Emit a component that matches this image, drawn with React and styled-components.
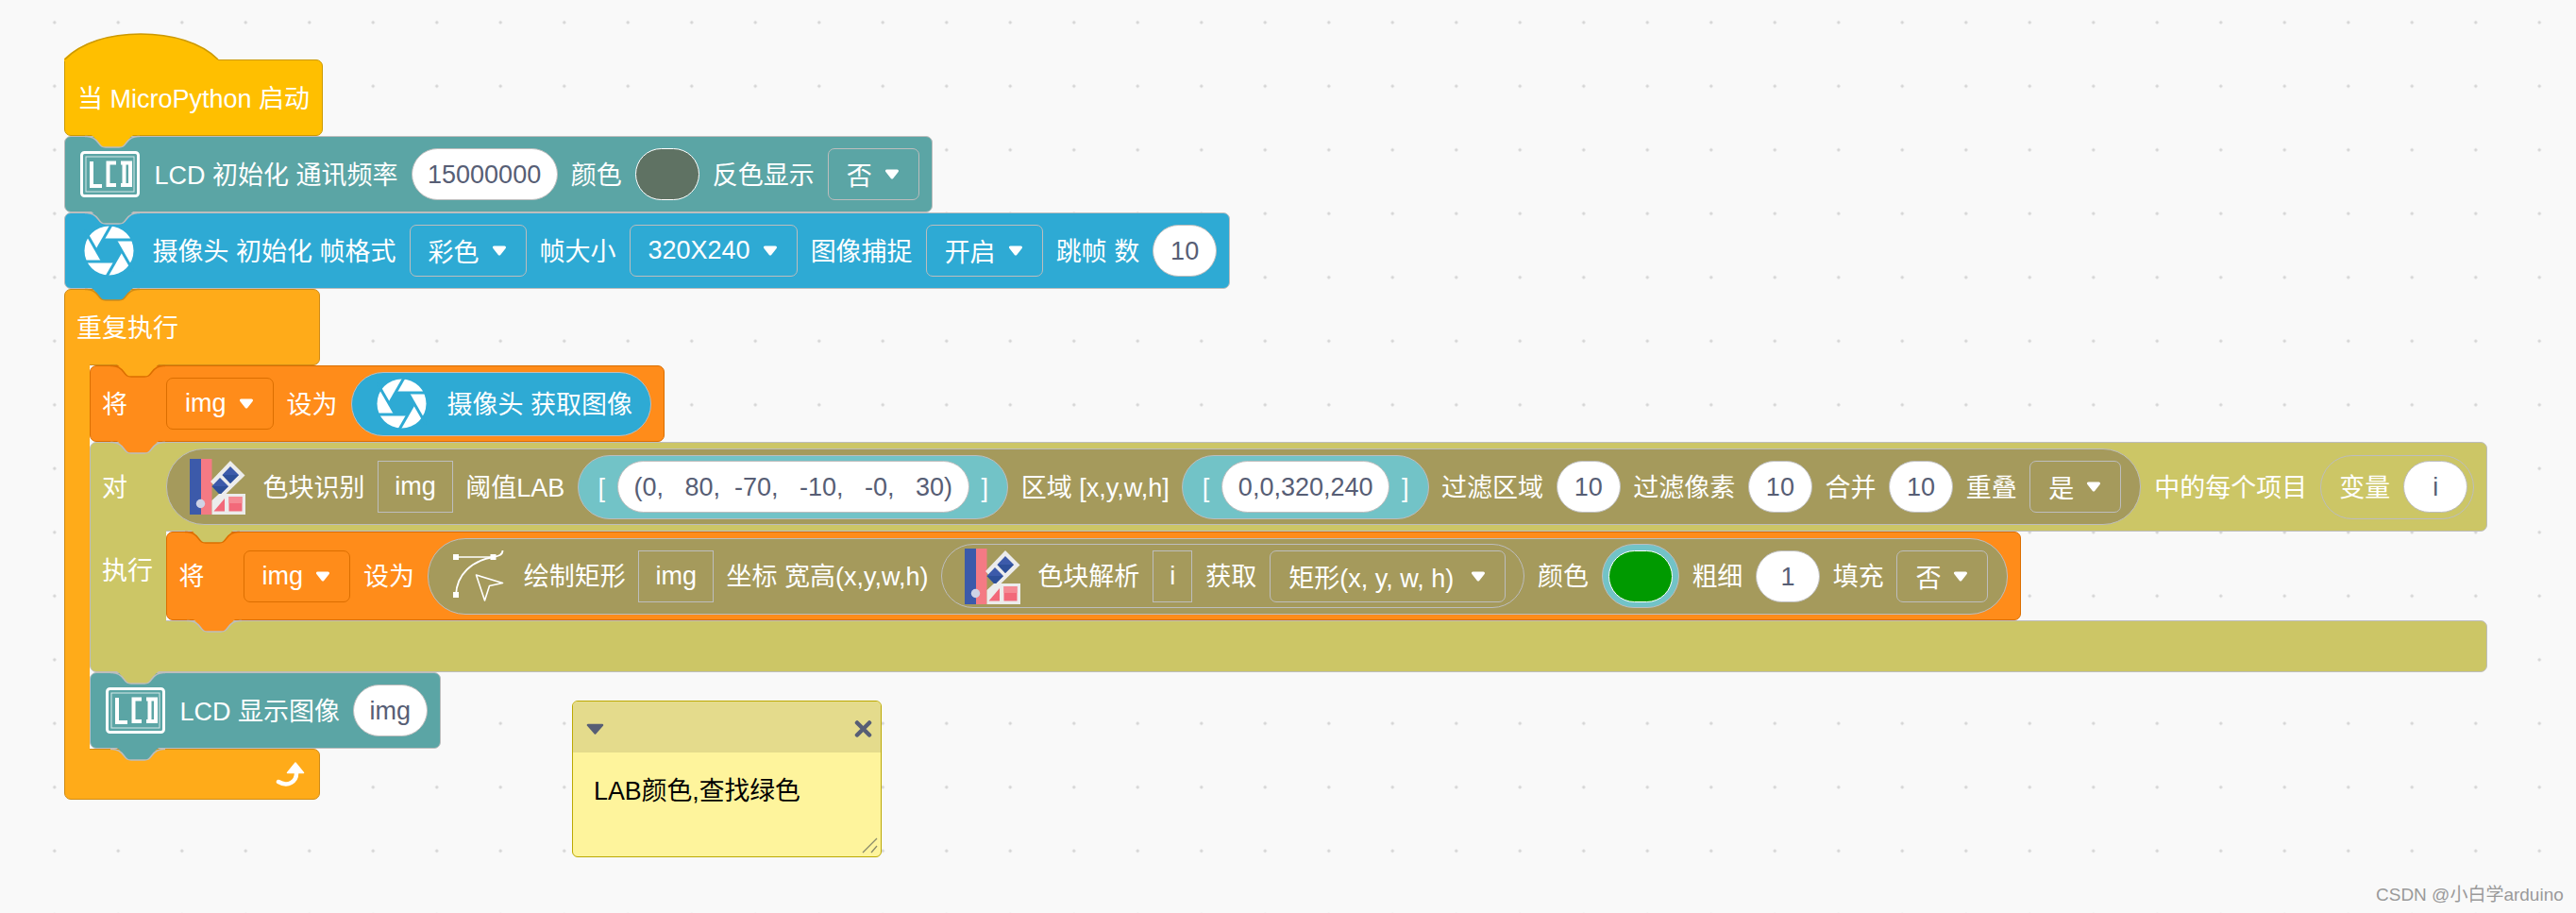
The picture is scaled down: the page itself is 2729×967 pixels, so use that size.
import React from 'react';
import styled, { createGlobalStyle } from 'styled-components';

const COLORS = {
  hat: '#ffbf00',
  hatEdge: '#cc9900',
  lcd: '#5ba5a5',
  camera: '#2eaad4',
  edge: '#bdbdbd',
  loop: '#ffab19',
  loopEdge: '#cf8b17',
  set: '#ff8c1a',
  setEdge: '#db6e00',
  each: '#ccc666',
  blob: '#a59a5c',
  teal: '#72c3c7',
};

const GlobalStyle = createGlobalStyle`
  html, body {
    margin: 0;
    padding: 0;
    height: 100%;
    overflow: hidden;
  }
  body {
    font-family: "Liberation Sans", "Noto Sans CJK SC", sans-serif;
  }
`;

const Workspace = styled.div`
  position: relative;
  width: 100%;
  height: 100vh;
  overflow: hidden;
  background-color: #f9f9f9;
  background-image: radial-gradient(circle at center, #d4d4d4 1.2px, transparent 2px);
  background-size: 67.5px 67.5px;
  background-position: 24px -10px;
`;

const Script = styled.div`
  position: absolute;
  left: 68px;
  top: 35px;
  display: flex;
  flex-direction: column;
  align-items: flex-start;
`;

const Stack = styled.div`
  display: flex;
  flex-direction: column;
  align-items: flex-start;
`;

const HatCap = styled.svg`
  display: block;
  position: relative;
  z-index: 1;
  margin-bottom: -2px;
`;

const Block = styled.div`
  position: relative;
  box-sizing: border-box;
  display: flex;
  align-items: center;
  gap: 14px;
  height: ${p => p.$h || 81}px;
  width: ${p => (p.$w ? `${p.$w}px` : 'auto')};
  padding: 0 13px 0 ${p => p.$pl || 12}px;
  background: ${p => p.$bg};
  border: 1.5px solid ${p => p.$edge || COLORS.edge};
  border-radius: 7px;
`;

const HatBody = styled(Block)`
  border-top-left-radius: 0;
`;

const Clamp = styled.div`
  display: flex;
  flex-direction: column;
  align-items: ${p => (p.$stretch ? 'stretch' : 'flex-start')};
`;

const ClampHead = styled(Block)`
  border-radius: 7px 7px 7px 0;
`;

const ClampBody = styled.div`
  display: flex;
  align-items: stretch;
`;

const Rail = styled.div`
  position: relative;
  z-index: 1;
  box-sizing: border-box;
  width: ${p => p.$w}px;
  margin: -1.5px 0;
  padding: 22px 0 0 12px;
  background: ${p => p.$bg};
  border-left: 1.5px solid ${p => p.$edge};
`;

const ClampFoot = styled.div`
  position: relative;
  box-sizing: border-box;
  display: flex;
  align-items: center;
  justify-content: flex-end;
  height: ${p => p.$h}px;
  width: ${p => (p.$w ? `${p.$w}px` : 'auto')};
  padding-right: 14px;
  background: ${p => p.$bg};
  border: 1.5px solid ${p => p.$edge};
  border-radius: 0 7px 7px 7px;
`;

const Label = styled.span`
  display: inline-block;
  padding-top: 2px;
  color: #fff;
  font-size: 27px;
  line-height: 38px;
  white-space: pre;
  flex: none;
  width: ${p => (p.$w ? `${p.$w}px` : 'auto')};
`;

const Field = styled.span`
  box-sizing: border-box;
  flex: none;
  display: flex;
  align-items: center;
  justify-content: center;
  height: 55px;
  min-width: 68px;
  padding: 2px 16.5px 0;
  background: #fff;
  border: 1.5px solid ${COLORS.edge};
  border-radius: 27.5px;
  color: #575e75;
  font-size: 27px;
  white-space: pre;
`;

const Square = styled.span`
  box-sizing: border-box;
  flex: none;
  display: flex;
  align-items: center;
  justify-content: center;
  height: 55px;
  padding: 0 17px;
  border: 1.5px solid ${COLORS.edge};
  color: #fff;
  font-size: 27px;
`;

const Dropdown = styled.span`
  box-sizing: border-box;
  flex: none;
  display: flex;
  align-items: center;
  gap: ${p => p.$gap || 13}px;
  height: 55px;
  padding: 0 20px 0 19px;
  border: 1.5px solid ${p => p.$edge || COLORS.edge};
  border-radius: 7px;
  color: #fff;
  font-size: 27px;
  white-space: pre;
`;

const Pill = styled.div`
  box-sizing: border-box;
  flex: none;
  display: flex;
  align-items: center;
  gap: ${p => p.$gap || 14}px;
  height: ${p => p.$h || 68}px;
  padding: 0 ${p => p.$pr || 19}px 0 ${p => p.$pl || 24}px;
  background: ${p => p.$bg || 'transparent'};
  border: 1.5px solid ${COLORS.edge};
  border-radius: 40px;
`;

const Swatch = styled.span`
  box-sizing: border-box;
  flex: none;
  display: block;
  width: 68px;
  height: 55px;
  background: ${p => p.$color};
  border: 1.5px solid #fff;
  border-radius: 27.5px;
`;

const SwatchWell = styled.span`
  box-sizing: border-box;
  flex: none;
  display: flex;
  align-items: center;
  justify-content: center;
  width: 82px;
  height: 68px;
  background: ${COLORS.teal};
  border: 1.5px solid ${COLORS.edge};
  border-radius: 34px;
`;

const Icon = styled.svg`
  display: block;
  flex: none;
  margin-right: ${p => p.$mr || 0}px;
`;

const NotchSvg = styled.svg`
  position: absolute;
  top: calc(100% - 1px);
  left: ${p => p.$left}px;
  z-index: 2;
  overflow: visible;
`;

const LoopArrow = styled.svg`
  display: block;
`;

const Comment = styled.div`
  position: absolute;
  left: 606px;
  top: 742px;
  box-sizing: border-box;
  width: 328px;
  height: 166px;
  display: flex;
  flex-direction: column;
  background: #fef49c;
  border: 1.5px solid #bca903;
  border-radius: 6px;
  overflow: hidden;
`;

const CommentHead = styled.div`
  box-sizing: border-box;
  flex: none;
  height: 54px;
  display: flex;
  align-items: center;
  justify-content: space-between;
  padding: 4px 9px 0 14px;
  background: #e4db8c;
`;

const CommentText = styled.div`
  padding: 22px 22px 0;
  color: #000;
  font-size: 26.8px;
  line-height: 38px;
`;

const Resizer = styled.svg`
  position: absolute;
  right: 3px;
  bottom: 3px;
`;

const Watermark = styled.div`
  position: absolute;
  left: 2517px;
  top: 936px;
  color: #9a9a9a;
  font-size: 19px;
  line-height: 24px;
  white-space: nowrap;
`;

const Notch = ({ fill, edge, left = 20.5 }) => (
  <NotchSvg $left={left} width="58" height="16" viewBox="0 0 58 16">
    <path
      d="M0 0 H3 C8 0 11 5 14 9 C17 13 18 14 22 14 H36 C40 14 41 13 44 9 C47 5 50 0 55 0 H58"
      fill={fill}
      stroke="none"
    />
    <path
      d="M0 2.5 H2 C8 2.5 11 5 14 9 C17 13 18 14 22 14 H36 C40 14 41 13 44 9 C47 5 50 2.5 56 2.5 H58"
      fill="none"
      stroke={edge}
      strokeWidth="1.5"
    />
  </NotchSvg>
);

const Arrow = () => (
  <svg width="16" height="11" viewBox="0 0 16 11" style={{ display: 'block', flex: 'none' }}>
    <path d="M2.5 2 H13.5 L8 9 Z" fill="#fff" stroke="#fff" strokeWidth="3" strokeLinejoin="round" />
  </svg>
);

const Select = ({ children, edge, gap }) => (
  <Dropdown $edge={edge} $gap={gap}>
    {children}
    <Arrow />
  </Dropdown>
);

const LcdIcon = () => (
  <Icon $mr={2} width="63" height="49" viewBox="0 0 63 49">
    <rect x="1.5" y="1.5" width="60" height="46" rx="3" fill="none" stroke="#fff" strokeWidth="3" />
    <rect x="6" y="6" width="51" height="37" fill="none" stroke="#fff" strokeOpacity=".75" strokeWidth="1" />
    <g fill="none" stroke="#fff" strokeWidth="4">
      <path d="M12 11 V37 H23" />
      <path d="M38 12.5 H29.5 V36 H38" />
      <path d="M43 12.5 H53 V36 H43 M46.5 12.5 V36" />
    </g>
  </Icon>
);

const ApertureIcon = ({ mr = 6 }) => (
  <Icon $mr={mr} width="53" height="53" viewBox="0 0 53 53">
    <circle cx="26.5" cy="26.5" r="26" fill="#fff" />
    <polygon
      points="20,15 33,15 39.5,26.5 33,38 20,38 13.5,26.5"
      fill={COLORS.camera}
    />
    {[0, 60, 120, 180, 240, 300].map(a => (
      <line
        key={a}
        x1="20"
        y1="15"
        x2="58"
        y2="15"
        stroke={COLORS.camera}
        strokeWidth="3"
        transform={`rotate(${a} 26.5 26.5)`}
      />
    ))}
  </Icon>
);

const PaletteIcon = ({ mr = 5 }) => (
  <Icon $mr={mr} width="59" height="59" viewBox="0 0 59 59">
    <rect x="0" y="0" width="12" height="59" fill="#3c5aaa" />
    <rect x="12" y="0" width="11.5" height="59" fill="#f47a84" />
    <circle cx="11.5" cy="47.5" r="4.7" fill="#cfd3e6" />
    <polygon points="43,2 58.5,17.5 36,39.5 22,24" fill="#ececec" />
    <polygon points="43,8 52,17 43,26 34.5,17" fill="#3c5aaa" />
    <polygon points="52,17 43,26 34.5,17" fill="#2d4f99" />
    <polygon points="32,20 41,29 32,38 23.5,29" fill="#3c5aaa" />
    <polygon points="41,29 32,38 23.5,29" fill="#2d4f99" />
    <polygon points="23.5,59 23.5,44 31,37 59,37 59,59" fill="#ececec" />
    <polygon points="25.5,55.5 37,42 37,55.5" fill="#f2697a" />
    <rect x="41.5" y="40" width="14" height="15.5" fill="#f2697a" />
    <rect x="41.5" y="40" width="14" height="7" fill="#f58a94" />
  </Icon>
);

const BezierIcon = () => (
  <Icon $mr={7} width="54" height="54" viewBox="0 0 54 54">
    <g fill="none" stroke="#fff">
      <path d="M3 7 H42.5" strokeWidth="1.6" />
      <path d="M3 47 C4 25 20 11 42.5 7 C48 6 52.5 5 52.5 0" strokeWidth="1.8" />
      <path d="M24.5 26 L52.5 34.5 L38.5 37.5 L33.5 53 Z" strokeWidth="1.6" strokeLinejoin="round" />
    </g>
    <g fill="#fff">
      <rect x="0" y="4" width="6" height="6" />
      <rect x="39.5" y="4" width="6" height="6" />
      <rect x="0" y="44" width="6" height="6" />
    </g>
  </Icon>
);

const BlobDetect = () => (
  <Pill $h={81} $bg={COLORS.blob} $pr={20} $gap={13.6}>
    <PaletteIcon />
    <Label>色块识别</Label>
    <Square>img</Square>
    <Label>阈值LAB</Label>
    <Pill $bg={COLORS.teal} $pl={20.5} $pr={20} $gap={13}>
      <Label>[</Label>
      <Field>(0,   80,  -70,   -10,   -0,   30)</Field>
      <Label>]</Label>
    </Pill>
    <Label>区域 [x,y,w,h]</Label>
    <Pill $bg={COLORS.teal} $pl={20.5} $pr={20} $gap={13}>
      <Label>[</Label>
      <Field>0,0,320,240</Field>
      <Label>]</Label>
    </Pill>
    <Label>过滤区域</Label>
    <Field>10</Field>
    <Label>过滤像素</Label>
    <Field>10</Field>
    <Label>合并</Label>
    <Field>10</Field>
    <Label>重叠</Label>
    <Select>是</Select>
  </Pill>
);

const DrawRect = () => (
  <Pill $h={81} $bg={COLORS.blob} $pl={26} $pr={20} $gap={13.7}>
    <BezierIcon />
    <Label>绘制矩形</Label>
    <Square>img</Square>
    <Label>坐标 宽高(x,y,w,h)</Label>
    <Pill $pl={24} $pr={19}>
      <PaletteIcon mr={4} />
      <Label>色块解析</Label>
      <Square>i</Square>
      <Label>获取</Label>
      <Select gap={18}>矩形(x, y, w, h)</Select>
    </Pill>
    <Label>颜色</Label>
    <SwatchWell>
      <Swatch $color="#009a00" />
    </SwatchWell>
    <Label>粗细</Label>
    <Field>1</Field>
    <Label>填充</Label>
    <Select>否</Select>
  </Pill>
);

const App = () => (
  <Workspace>
    <GlobalStyle />
    <Script>
      <HatCap width="164" height="30" viewBox="0 0 164 30">
        <path d="M0 30 V27 C18 10 48 1 81 1 C114 1 145 10 163 28 V30 Z" fill={COLORS.hat} />
        <path d="M0.7 28 C18 10 48 1 81 1 C114 1 145 10 163 28" fill="none" stroke={COLORS.hatEdge} strokeWidth="1.5" />
      </HatCap>
      <HatBody $bg={COLORS.hat} $edge={COLORS.hatEdge} $w={274} $pl={13}>
        <Label>当 MicroPython 启动</Label>
        <Notch fill={COLORS.hat} edge={COLORS.edge} />
      </HatBody>

      <Block $bg={COLORS.lcd} $pl={15.5}>
        <LcdIcon />
        <Label>LCD 初始化 通讯频率</Label>
        <Field>15000000</Field>
        <Label>颜色</Label>
        <Swatch $color="#5f7263" />
        <Label>反色显示</Label>
        <Select>否</Select>
        <Notch fill={COLORS.lcd} edge={COLORS.edge} />
      </Block>

      <Block $bg={COLORS.camera} $pl={19.5}>
        <ApertureIcon />
        <Label>摄像头 初始化 帧格式</Label>
        <Select>彩色</Select>
        <Label>帧大小</Label>
        <Select>320X240</Select>
        <Label>图像捕捉</Label>
        <Select>开启</Select>
        <Label>跳帧 数</Label>
        <Field>10</Field>
        <Notch fill={COLORS.camera} edge={COLORS.loopEdge} />
      </Block>

      <Clamp>
        <ClampHead $bg={COLORS.loop} $edge={COLORS.loopEdge} $w={271}>
          <Label>重复执行</Label>
          <Notch fill={COLORS.loop} edge={COLORS.setEdge} left={47.5} />
        </ClampHead>
        <ClampBody>
          <Rail $w={27} $bg={COLORS.loop} $edge={COLORS.loopEdge} />
          <Stack>
            <Block $bg={COLORS.set} $edge={COLORS.setEdge}>
              <Label $w={54}>将</Label>
              <Select edge={COLORS.setEdge}>img</Select>
              <Label>设为</Label>
              <Pill $bg={COLORS.camera} $pl={26}>
                <ApertureIcon mr={8} />
                <Label>摄像头 获取图像</Label>
              </Pill>
              <Notch fill={COLORS.set} edge={COLORS.edge} />
            </Block>

            <Clamp $stretch>
              <ClampHead $h={95} $bg={COLORS.each}>
                <Label $w={54}>对</Label>
                <BlobDetect />
                <Label>中的每个项目</Label>
                <Pill $pl={19} $pr={6}>
                  <Label>变量</Label>
                  <Field>i</Field>
                </Pill>
                <Notch fill={COLORS.each} edge={COLORS.setEdge} left={100} />
              </ClampHead>
              <ClampBody>
                <Rail $w={81} $bg={COLORS.each} $edge={COLORS.edge}>
                  <Label>执行</Label>
                </Rail>
                <Block $h={94} $bg={COLORS.set} $edge={COLORS.setEdge} $pl={12.5}>
                  <Label $w={54}>将</Label>
                  <Select edge={COLORS.setEdge}>img</Select>
                  <Label>设为</Label>
                  <DrawRect />
                  <Notch fill={COLORS.set} edge={COLORS.edge} />
                </Block>
              </ClampBody>
              <ClampFoot $h={55} $bg={COLORS.each} $edge={COLORS.edge}>
                <Notch fill={COLORS.each} edge={COLORS.edge} />
              </ClampFoot>
            </Clamp>

            <Block $bg={COLORS.lcd} $pl={15.5}>
              <LcdIcon />
              <Label>LCD 显示图像</Label>
              <Field>img</Field>
              <Notch fill={COLORS.lcd} edge={COLORS.edge} />
            </Block>
          </Stack>
        </ClampBody>
        <ClampFoot $h={54} $w={271} $bg={COLORS.loop} $edge={COLORS.loopEdge}>
          <LoopArrow width="32" height="27" viewBox="0 0 32 27">
            <path d="M22 10 C23 21 13 27 3 21" fill="none" stroke="#fff" strokeWidth="4.5" strokeLinecap="round" />
            <path d="M21 1 L29.5 11.5 H12.5 Z" fill="#fff" stroke="#fff" strokeWidth="1.5" strokeLinejoin="round" />
          </LoopArrow>
        </ClampFoot>
      </Clamp>
    </Script>

    <Comment>
      <CommentHead>
        <svg width="19" height="12" viewBox="0 0 19 12">
          <path d="M2 2 H17 L9.5 10.5 Z" fill="#575e75" stroke="#575e75" strokeWidth="2.5" strokeLinejoin="round" />
        </svg>
        <svg width="19" height="18" viewBox="0 0 19 18">
          <path d="M3 2.5 L16 15.5 M16 2.5 L3 15.5" stroke="#575e75" strokeWidth="4.5" strokeLinecap="round" />
        </svg>
      </CommentHead>
      <CommentText>LAB颜色,查找绿色</CommentText>
      <Resizer width="17" height="17" viewBox="0 0 17 17">
        <path d="M1 16 L16 1 M10 16 L16 9" stroke="#8a8a6a" strokeWidth="1.3" />
      </Resizer>
    </Comment>

    <Watermark>CSDN @小白学arduino</Watermark>
  </Workspace>
);

export default App;
